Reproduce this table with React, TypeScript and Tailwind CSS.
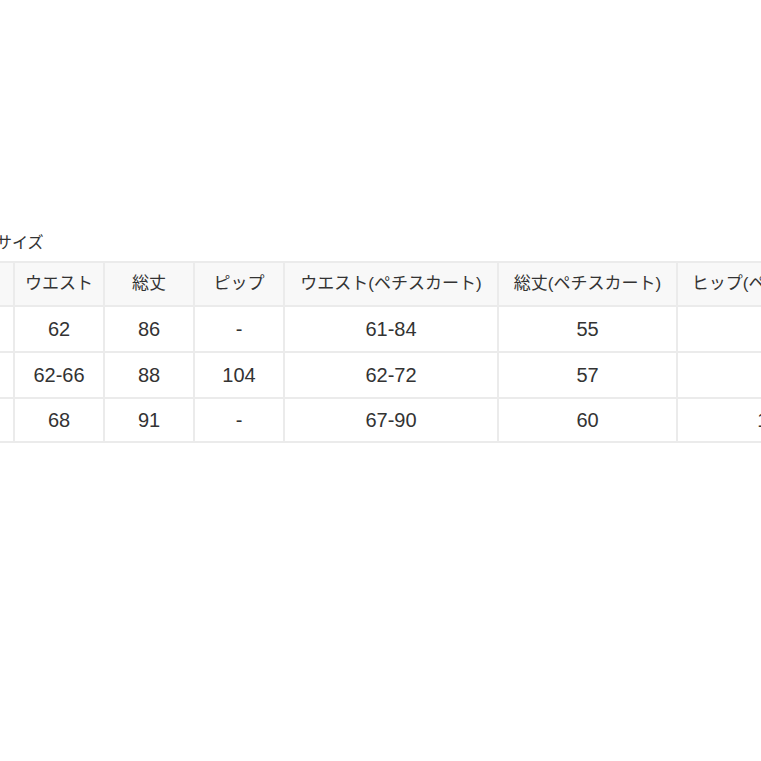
import React from "react";

const font = { fontFamily: '"Liberation Sans", "Noto Sans CJK JP", sans-serif' };

const headers = ["サイズ", "ウエスト", "総丈", "ピップ", "ウエスト(ペチスカート)", "総丈(ペチスカート)", "ヒップ(ペチスカート)"];
const rows = [
  ["S", "62", "86", "-", "61-84", "55", "92"],
  ["M", "62-66", "88", "104", "62-72", "57", "-"],
  ["L", "68", "91", "-", "67-90", "60", "100"],
];

export default function App() {
  return (
    <div className="w-[761px] h-[761px] bg-white overflow-hidden text-[#333]" style={font}>
      <div className="pt-[233px]">
        <div className="ml-[-4px] text-[16px] leading-[20px] whitespace-nowrap">サイズ</div>
        <div className="mt-[8px] w-[761px] overflow-hidden">
          <table className="ml-[-77px] w-[947px] table-fixed border-collapse">
            <colgroup>
              <col className="w-[90px]" />
              <col className="w-[90px]" />
              <col className="w-[90px]" />
              <col className="w-[90px]" />
              <col className="w-[214px]" />
              <col className="w-[179px]" />
              <col className="w-[194px]" />
            </colgroup>
            <thead>
              <tr className="h-[44px] bg-[#f8f8f8]">
                {headers.map((h, i) => (
                  <th
                    key={i}
                    className="border-2 border-[#ebebeb] font-normal text-[17px] text-center whitespace-nowrap px-0"
                  >
                    {h}
                  </th>
                ))}
              </tr>
            </thead>
            <tbody>
              {rows.map((r, ri) => (
                <tr key={ri} className={ri === 2 ? "h-[44px]" : "h-[46px]"}>
                  {r.map((c, ci) => (
                    <td
                      key={ci}
                      className="border-2 border-[#ebebeb] text-[20px] text-center whitespace-nowrap px-0"
                    >
                      {c}
                    </td>
                  ))}
                </tr>
              ))}
            </tbody>
          </table>
        </div>
      </div>
    </div>
  );
}
